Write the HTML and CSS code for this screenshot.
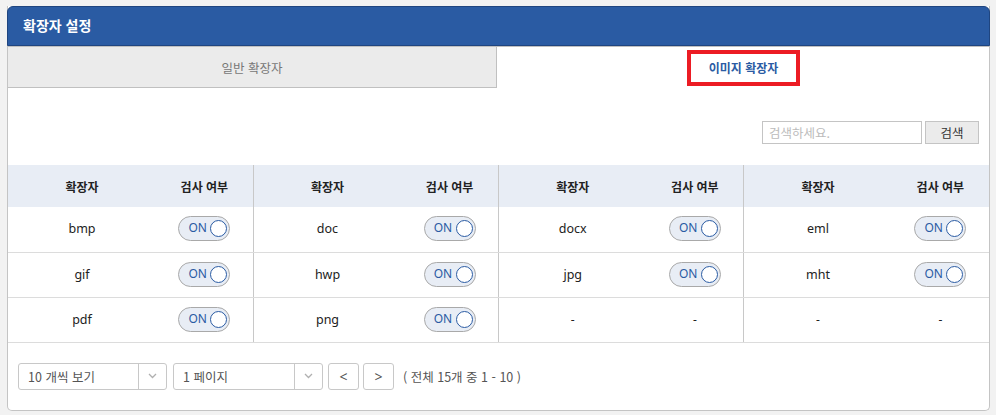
FILE: index.html
```html
<!DOCTYPE html>
<html lang="ko">
<head>
<meta charset="utf-8">
<title>확장자 설정</title>
<link rel="stylesheet" href="styles.css">
</head>
<body>
<div class="panel">
  <div class="head">확장자 설정</div>
  <div class="tabs">
    <div class="tab off">일반 확장자</div>
    <div class="tab on"><span class="mark">이미지 확장자</span></div>
  </div>
  <div class="search">
    <input class="sinput" type="text" placeholder="검색하세요.">
    <button class="sbtn">검색</button>
  </div>
  <table class="grid">
    <colgroup>
      <col class="ce"><col class="ct"><col class="ce"><col class="ct"><col class="ce"><col class="ct"><col class="ce"><col class="ct">
    </colgroup>
    <thead>
      <tr>
        <th class="ext first">확장자</th><th>검사 여부</th>
        <th class="ext">확장자</th><th>검사 여부</th>
        <th class="ext">확장자</th><th>검사 여부</th>
        <th class="ext">확장자</th><th>검사 여부</th>
      </tr>
    </thead>
    <tbody>
      <tr>
        <td class="ext first">bmp</td><td><span class="tog"><span class="on">ON</span><span class="knob"></span></span></td>
        <td class="ext">doc</td><td><span class="tog"><span class="on">ON</span><span class="knob"></span></span></td>
        <td class="ext">docx</td><td><span class="tog"><span class="on">ON</span><span class="knob"></span></span></td>
        <td class="ext">eml</td><td><span class="tog"><span class="on">ON</span><span class="knob"></span></span></td>
      </tr>
      <tr>
        <td class="ext first">gif</td><td><span class="tog"><span class="on">ON</span><span class="knob"></span></span></td>
        <td class="ext">hwp</td><td><span class="tog"><span class="on">ON</span><span class="knob"></span></span></td>
        <td class="ext">jpg</td><td><span class="tog"><span class="on">ON</span><span class="knob"></span></span></td>
        <td class="ext">mht</td><td><span class="tog"><span class="on">ON</span><span class="knob"></span></span></td>
      </tr>
      <tr>
        <td class="ext first">pdf</td><td><span class="tog"><span class="on">ON</span><span class="knob"></span></span></td>
        <td class="ext">png</td><td><span class="tog"><span class="on">ON</span><span class="knob"></span></span></td>
        <td class="ext dash">-</td><td class="dash">-</td>
        <td class="ext dash">-</td><td class="dash">-</td>
      </tr>
    </tbody>
  </table>
  <div class="foot">
    <div class="sel s1"><span class="stext">10 개씩 보기</span><span class="arr"><svg width="9" height="6" viewBox="0 0 9 6"><path d="M1 1 L4.5 4.5 L8 1" fill="none" stroke="#b0b0b0" stroke-width="1.3"/></svg></span></div>
    <div class="sel s2"><span class="stext">1 페이지</span><span class="arr"><svg width="9" height="6" viewBox="0 0 9 6"><path d="M1 1 L4.5 4.5 L8 1" fill="none" stroke="#b0b0b0" stroke-width="1.3"/></svg></span></div>
    <button class="pbtn">&lt;</button>
    <button class="pbtn pn">&gt;</button>
    <span class="total">( 전체 15개 중 1 - 10 )</span>
  </div>
</div>
</body>
</html>
```
FILE: styles.css
```css
* { box-sizing: border-box; }
body {
  margin: 0;
  background: #f2f2f2;
  font-family: "Noto Sans", "Noto Sans CJK KR", sans-serif;
  color: #333;
}
.panel {
  margin: 6px 0 0 7px;
  width: 983px;
  background: #fff;
  border: 1px solid #c4c4c4;
  border-top: none;
  border-radius: 0 0 5px 5px;
}
.head {
  height: 40px;
  margin: 0 -1px;
  background: #2a5ba3;
  border: 1px solid #1f4580;
  border-radius: 6px 6px 0 0;
  color: #fff;
  font-family: "Noto Sans CJK KR", sans-serif;
  font-weight: 700;
  font-size: 14px;
  line-height: 37px;
  padding-left: 15px;
}
.tabs {
  display: flex;
  height: 42px;
  border-top: 1px solid #c0c0c0;
}
.tab {
  display: flex;
  align-items: center;
  justify-content: center;
  font-family: "Noto Sans CJK KR", sans-serif;
  font-size: 12.5px;
}
.tab.off {
  flex: 0 0 489px;
  background: #ebebeb;
  border-right: 1px solid #c0c0c0;
  border-bottom: 1px solid #c0c0c0;
  color: #777;
}
.tab.on {
  flex: 1;
  color: #2a5ba3;
  font-weight: 700;
  padding-top: 1px;
}
.mark {
  display: inline-flex;
  align-items: center;
  justify-content: center;
  width: 113px;
  height: 36px;
  border: 4px solid #ec1c24;
  margin-left: 1px;
}
.search {
  display: flex;
  justify-content: flex-end;
  gap: 3px;
  padding: 33px 10px 21px 0;
}
.sinput {
  width: 160px;
  height: 23px;
  border: 1px solid #c4c4c4;
  padding: 0 6px;
  font-family: "Noto Sans CJK KR", sans-serif;
  font-size: 12.5px;
  outline: none;
}
.sinput::placeholder { color: #bbb; }
.sbtn {
  width: 54px;
  height: 23px;
  border: 1px solid #c4c4c4;
  background: #ebebeb;
  color: #333;
  font-family: "Noto Sans CJK KR", sans-serif;
  font-size: 12.5px;
  padding: 0;
}
.grid {
  width: 981px;
  border-collapse: collapse;
  table-layout: fixed;
}
.ce { width: 148px; }
.ct { width: 97.25px; }
.grid th {
  height: 42px;
  background: #e8edf5;
  font-family: "Noto Sans CJK KR", sans-serif;
  font-weight: 700;
  font-size: 12px;
  color: #222;
  padding: 0;
  text-align: center;
}
.grid td {
  height: 45px;
  border-bottom: 1px solid #dcdcdc;
  text-align: center;
  font-size: 12.5px;
  color: #222;
  padding: 0;
  padding-bottom: 1px;
}
.grid .ext { border-left: 1px solid #c8c8c8; }
.grid .ext.first { border-left: none; }
.grid .dash { font-size: 12px; }
.tog {
  display: inline-flex;
  align-items: center;
  justify-content: space-between;
  width: 52px;
  height: 25px;
  border: 1px solid #a9a9a9;
  border-radius: 13px;
  background: #e8edf5;
  padding: 0 2px 0 9px;
  vertical-align: middle;
}
.on {
  color: #2a5ba3;
  font-size: 12px;
  line-height: 1;
  padding-bottom: 1px;
}
.knob {
  width: 17px;
  height: 17px;
  border-radius: 50%;
  border: 1.5px solid #2a5ba3;
  background: #fff;
}
.foot {
  display: flex;
  align-items: center;
  padding: 20px 0 20px 10px;
  font-family: "Noto Sans CJK KR", sans-serif;
}
.sel {
  display: flex;
  height: 27px;
  border: 1px solid #c8c8c8;
  border-radius: 3px;
  font-size: 12.5px;
  color: #555;
}
.s1 { width: 149px; }
.s2 { width: 150px; margin-left: 6px; }
.stext {
  flex: 1;
  display: flex;
  align-items: center;
  padding-left: 9px;
}
.arr {
  width: 28px;
  border-left: 1px solid #c8c8c8;
  display: flex;
  align-items: center;
  justify-content: center;
}
.pbtn {
  width: 31px;
  height: 27px;
  margin-left: 5px;
  border: 1px solid #c8c8c8;
  border-radius: 3px;
  background: #fff;
  color: #555;
  font-family: "Noto Sans", sans-serif;
  font-size: 14px;
  padding: 0;
}
.pn { margin-left: 4px; }
.total {
  margin-left: 9px;
  font-size: 12.5px;
  color: #555;
}
```
